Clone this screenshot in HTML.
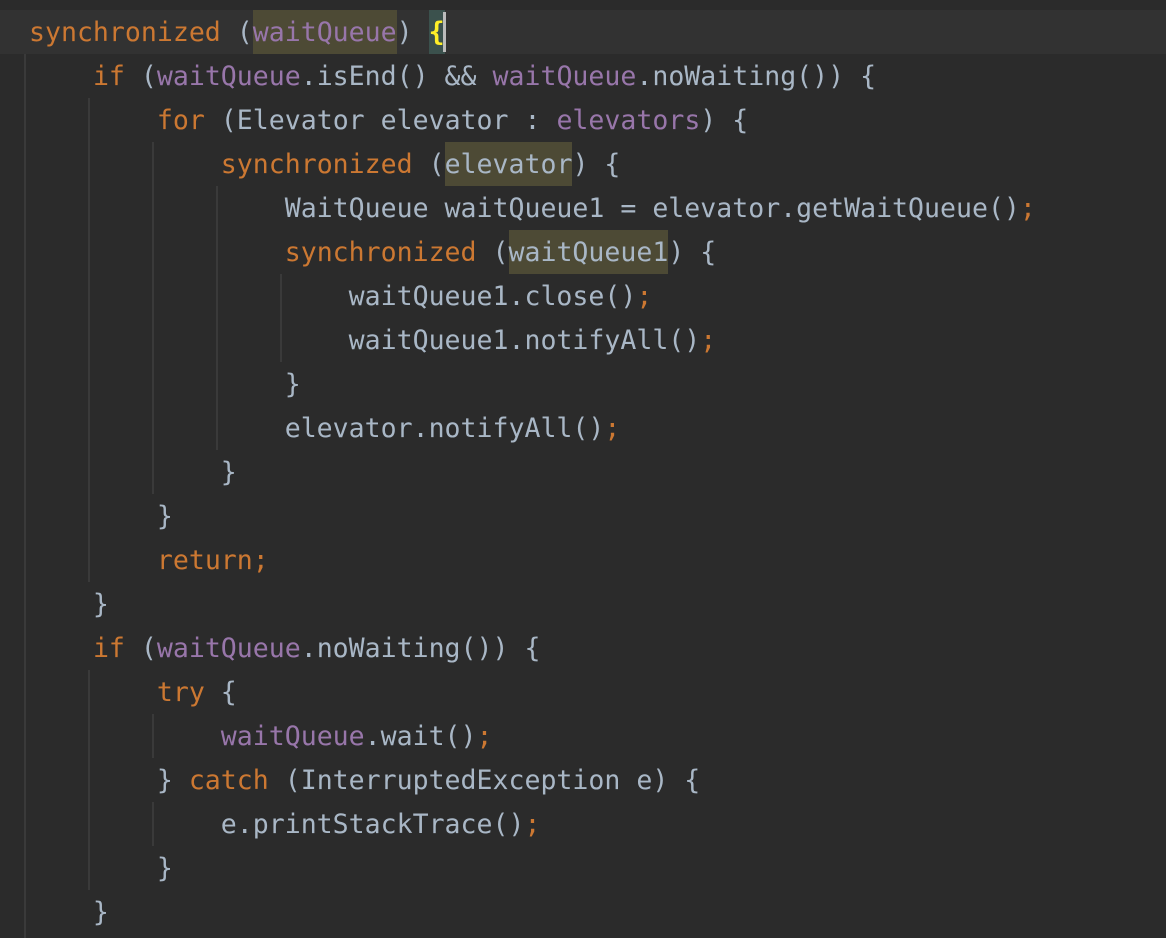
<!DOCTYPE html>
<html><head><style>
body{margin:0;background:#2b2b2b;width:1166px;height:938px;overflow:hidden;position:relative;font-family:"DejaVu Sans Mono","Liberation Mono",monospace;font-size:26.55px;color:#a9b7c6}
.cur{position:absolute;left:0;top:10px;width:1166px;height:44px;background:#323232}
.g{position:absolute;width:2px;background:#3a3a3a}
.l{position:absolute;left:29px;height:44px;line-height:46px;white-space:pre}
.k{color:#cc7832}.p{color:#9876aa}
.h{background:#4d4a35;display:inline-block;height:44px;vertical-align:top}
.b{background:#3b514d;color:#ffef28;display:inline-block;height:44px;font-weight:bold;vertical-align:top}
.c{position:absolute;left:443px;top:12px;width:3px;height:40px;background:#bbbbbb}
</style></head><body>
<div class="cur"></div>
<div class="g" style="left:24px;top:54px;height:884px"></div>
<div class="g" style="left:88px;top:98px;height:484px"></div>
<div class="g" style="left:88px;top:670px;height:220px"></div>
<div class="g" style="left:152px;top:142px;height:352px"></div>
<div class="g" style="left:152px;top:714px;height:44px"></div>
<div class="g" style="left:152px;top:802px;height:44px"></div>
<div class="g" style="left:216px;top:186px;height:264px"></div>
<div class="g" style="left:280px;top:274px;height:88px"></div>
<div class="l" style="top:10px"><span class="k">synchronized</span> (<span class="h p">waitQueue</span>) <span class="b">{</span></div>
<div class="c"></div>
<div class="l" style="top:54px">    <span class="k">if</span> (<span class="p">waitQueue</span>.isEnd() &amp;&amp; <span class="p">waitQueue</span>.noWaiting()) {</div>
<div class="l" style="top:98px">        <span class="k">for</span> (Elevator elevator : <span class="p">elevators</span>) {</div>
<div class="l" style="top:142px">            <span class="k">synchronized</span> (<span class="h">elevator</span>) {</div>
<div class="l" style="top:186px">                WaitQueue waitQueue1 = elevator.getWaitQueue()<span class="k">;</span></div>
<div class="l" style="top:230px">                <span class="k">synchronized</span> (<span class="h">waitQueue1</span>) {</div>
<div class="l" style="top:274px">                    waitQueue1.close()<span class="k">;</span></div>
<div class="l" style="top:318px">                    waitQueue1.notifyAll()<span class="k">;</span></div>
<div class="l" style="top:362px">                }</div>
<div class="l" style="top:406px">                elevator.notifyAll()<span class="k">;</span></div>
<div class="l" style="top:450px">            }</div>
<div class="l" style="top:494px">        }</div>
<div class="l" style="top:538px">        <span class="k">return;</span></div>
<div class="l" style="top:582px">    }</div>
<div class="l" style="top:626px">    <span class="k">if</span> (<span class="p">waitQueue</span>.noWaiting()) {</div>
<div class="l" style="top:670px">        <span class="k">try</span> {</div>
<div class="l" style="top:714px">            <span class="p">waitQueue</span>.wait()<span class="k">;</span></div>
<div class="l" style="top:758px">        } <span class="k">catch</span> (InterruptedException e) {</div>
<div class="l" style="top:802px">            e.printStackTrace()<span class="k">;</span></div>
<div class="l" style="top:846px">        }</div>
<div class="l" style="top:890px">    }</div>
</body></html>
